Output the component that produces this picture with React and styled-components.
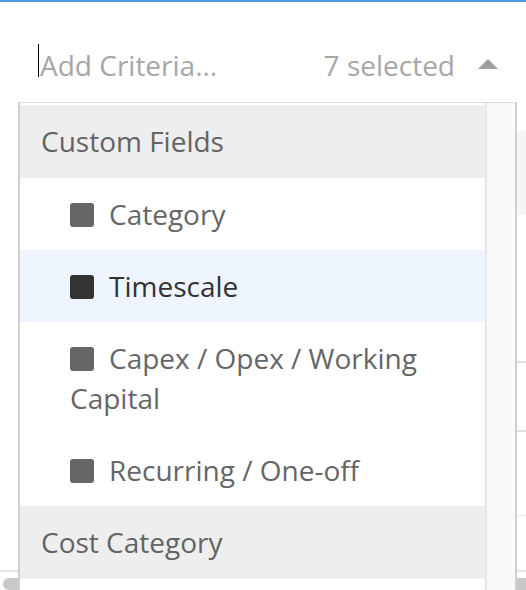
import styled, { createGlobalStyle } from "styled-components";

const GlobalStyle = createGlobalStyle`
    html, body {
        margin: 0;
        padding: 0;
        background: #ffffff;
    }
    body {
        font-family: "Open Sans", "Noto Sans", sans-serif;
        overflow: hidden;
    }
`;

const Page = styled.div`
    position: relative;
    width: 526px;
    height: 590px;
    overflow: hidden;
    border-top: 2px solid #4a97e4;
    box-sizing: border-box;
`;

const FieldRow = styled.div`
    display: flex;
    align-items: center;
    height: 40px;
    margin-top: 43px;
    padding: 0 28px 0 38px;
    font-size: 28px;
    line-height: 40px;
    color: #a6a6a6;
`;

const Caret = styled.span`
    width: 1px;
    height: 33px;
    background: #000000;
    margin-top: -10px;
`;

const Placeholder = styled.span`
    flex: 1;
    padding-left: 1px;
`;

const Count = styled.span`
    margin-right: 23px;
`;

const Arrow = styled.span`
    width: 0;
    height: 0;
    border-left: 10px solid transparent;
    border-right: 10px solid transparent;
    border-bottom: 10px solid #a0a0a0;
    margin-top: -2px;
`;

// page content that sits behind the open dropdown
const Backdrop = styled.div`
    display: flex;
    flex-direction: column;
    margin-top: 46px;
`;

const SummaryCard = styled.div`
    height: 84px;
    margin-left: 480px;
    background: #f4f5f7;
`;

const TableRow = styled.div`
    height: ${(p) => p.h}px;
    margin-left: ${(p) => (p.full ? 0 : 480)}px;
    border-bottom: ${(p) => p.bw || 2}px solid ${(p) => p.line || "#e0e0e0"};
`;

const HScroll = styled.div`
    height: 12px;
    margin: 6px 0 0 3px;
    background: #c8c8c8;
    border-radius: 6px 0 0 6px;
`;

const Dropdown = styled.div`
    position: absolute;
    top: 100px;
    left: 18px;
    width: 499px;
    bottom: 0;
    display: flex;
    background: #ffffff;
    border-top: 1px solid #dcdcdc;
    border-left: 2px solid #d0d0d0;
    border-right: 2px solid #cfcfcf;
    box-sizing: border-box;
`;

const List = styled.div`
    flex: 1;
    padding-top: 2px;
    overflow: hidden;
`;

const GroupHeader = styled.div`
    padding: 16px 21px;
    line-height: 41px;
    font-size: 28px;
    color: #636363;
    background: #eeeeee;
`;

const Option = styled.div`
    padding: 16px 30px 16px 50px;
    line-height: 40px;
    font-size: 28px;
    color: ${(p) => (p.active ? "#333333" : "#666666")};
    background: ${(p) => (p.active ? "#eef5fe" : "#ffffff")};
`;

const Check = styled.span`
    display: inline-block;
    width: 24px;
    height: 24px;
    margin-right: 15px;
    border-radius: 3px;
    vertical-align: -2px;
    background: ${(p) => (p.active ? "#333333" : "#666666")};
`;

const ScrollTrack = styled.div`
    width: 28px;
    background: #fafafa;
    border-left: 2px solid #e6e6e6;
`;

const groups = [
    {
        title: "Custom Fields",
        options: [
            { label: "Category" },
            { label: "Timescale", active: true },
            { label: "Capex / Opex / Working Capital" },
            { label: "Recurring / One-off" },
        ],
    },
    {
        title: "Cost Category",
        options: [],
    },
];

export default function App() {
    return (
        <Page>
            <GlobalStyle />
            <FieldRow>
                <Caret />
                <Placeholder>Add Criteria...</Placeholder>
                <Count>7 selected</Count>
                <Arrow />
            </FieldRow>
            <Backdrop>
                <SummaryCard />
                <TableRow h={146} />
                <TableRow h={67} />
                <TableRow h={83} line="#ececec" bw={1} />
                <TableRow h={54} line="#e4e4e4" full />
                <HScroll />
            </Backdrop>
            <Dropdown>
                <List>
                    {groups.map((group) => (
                        <div key={group.title}>
                            <GroupHeader>{group.title}</GroupHeader>
                            {group.options.map((opt) => (
                                <Option key={opt.label} active={opt.active}>
                                    <Check active={opt.active} />
                                    {opt.label}
                                </Option>
                            ))}
                        </div>
                    ))}
                </List>
                <ScrollTrack />
            </Dropdown>
        </Page>
    );
}
